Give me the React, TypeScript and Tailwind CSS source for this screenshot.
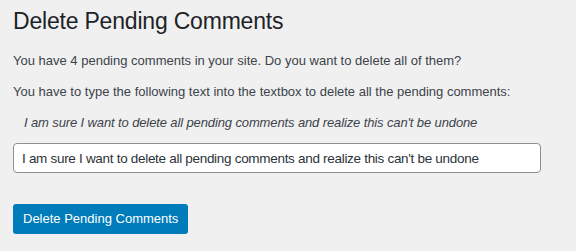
export default function App() {
  const phrase = "I am sure I want to delete all pending comments and realize this can't be undone"

  return (
    <div className="min-h-screen w-full bg-[#f0f0f1] pl-[13px] pr-4 pt-[4px] font-['Liberation_Sans',sans-serif] text-[13px] text-[#3c434a]">
      <h1 className="text-[23px] leading-[30px] font-normal text-[#1d2327] py-[2px] tracking-[-0.2px]">Delete Pending Comments</h1>

      <p className="mt-[13px] leading-[19px]">
        You have 4 pending comments in your site. Do you want to delete all of them?
      </p>
      <p className="mt-[12px] leading-[19px]">
        You have to type the following text into the textbox to delete all the pending comments:
      </p>
      <p className="mt-[12px] pl-[11px] leading-[19px] italic tracking-[-0.12px]">{phrase}</p>

      <input
        type="text"
        defaultValue={phrase}
        className="mt-[11px] block h-[30px] w-[528px] rounded-[4px] border border-[#8c8f94] bg-white px-[8px] text-[13.5px] tracking-[-0.3px] text-[#2c3338] outline-none"
      />

      <button className="mt-[31px] h-[30px] rounded-[3px] bg-[#007cba] px-[10px] text-[13px] text-white">
        Delete Pending Comments
      </button>
    </div>
  )
}
